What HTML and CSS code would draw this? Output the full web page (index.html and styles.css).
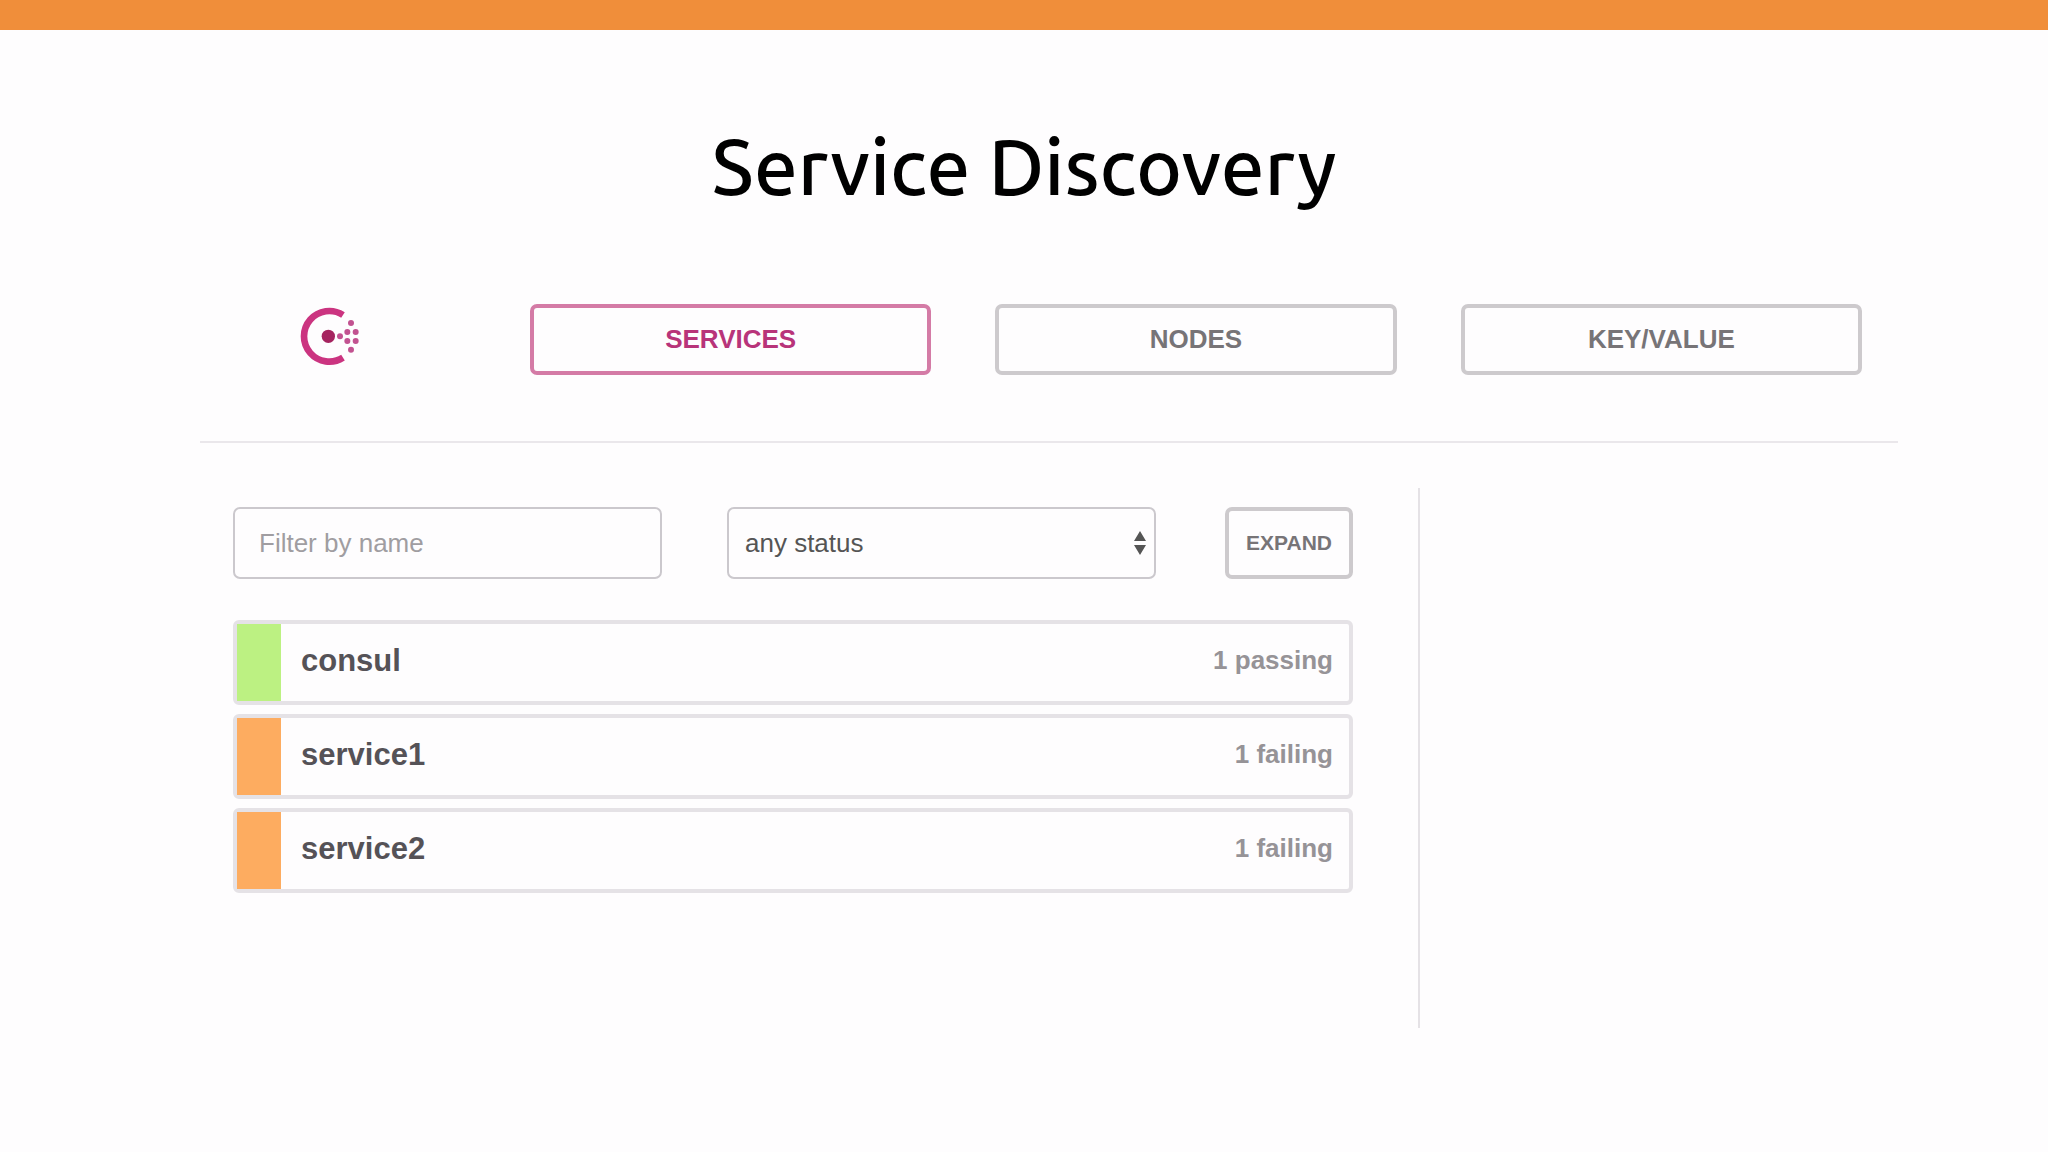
FILE: index.html
```html
<!DOCTYPE html>
<html lang="en">
<head>
<meta charset="utf-8">
<title>Service Discovery</title>
<link rel="stylesheet" href="styles.css">
</head>
<body>
<div class="accent-bar"></div>
<h1 class="title">Service Discovery</h1>
<header class="topbar">
  <a class="logo" href="#" aria-label="Consul">
    <svg class="logo-mark" viewBox="60 50 180 177" aria-hidden="true">
      <path d="M189 74A76 76 0 1 0 189 202" fill="none" stroke="#cb3480" stroke-width="20"/>
      <circle cx="145" cy="138" r="20" fill="#a5235f"/>
      <g fill="#c25290">
        <circle cx="180" cy="138" r="9"/>
        <circle cx="213" cy="98" r="9"/>
        <circle cx="202" cy="125" r="9"/>
        <circle cx="227" cy="125" r="9"/>
        <circle cx="202" cy="152" r="9"/>
        <circle cx="227" cy="152" r="9"/>
        <circle cx="213" cy="178" r="9"/>
      </g>
    </svg>
  </a>
  <a class="tab tab-active" href="#services">SERVICES</a>
  <a class="tab" href="#nodes">NODES</a>
  <a class="tab" href="#kv">KEY/VALUE</a>
</header>
<hr class="rule">
<main class="content">
  <section class="services" id="services">
    <form class="filters">
      <input class="field" type="text" placeholder="Filter by name" aria-label="Filter by name">
      <div class="select-wrap">
        <select class="field select" aria-label="Status">
          <option>any status</option>
          <option>passing</option>
          <option>failing</option>
        </select>
        <svg class="arrows" viewBox="0 0 12 24" aria-hidden="true">
          <path d="M6 0L12 10H0ZM6 24L12 14H0Z" fill="#555"/>
        </svg>
      </div>
      <button class="expand" type="button">EXPAND</button>
    </form>
    <ul class="list">
      <li><a class="row passing" href="#consul"><span class="name">consul</span><span class="checks">1 passing</span></a></li>
      <li><a class="row failing" href="#service1"><span class="name">service1</span><span class="checks">1 failing</span></a></li>
      <li><a class="row failing" href="#service2"><span class="name">service2</span><span class="checks">1 failing</span></a></li>
    </ul>
  </section>
</main>
</body>
</html>
```
FILE: styles.css
```css
* {
  box-sizing: border-box;
}

body {
  margin: 0;
  background: #fefdfe;
  font-family: "Liberation Sans", Arial, sans-serif;
  font-size: 26px;
}

.accent-bar {
  height: 30px;
  background: #f08e3a;
}

.title {
  margin: 88px 0 90px;
  font-family: Ubuntu, "Noto Sans", sans-serif;
  font-size: 78px;
  font-weight: 500;
  line-height: 96px;
  text-align: center;
  color: #000;
}

.topbar {
  display: grid;
  grid-template-columns: 166px repeat(3, 1fr);
  gap: 64px;
  margin: 0 186px 0 300px;
}

.logo-mark {
  display: block;
  width: 60px;
  height: 59px;
  margin-top: 3px;
}

.tab {
  display: flex;
  align-items: center;
  justify-content: center;
  height: 71px;
  border: 4px solid #cdcacd;
  border-radius: 7px;
  font-weight: 700;
  color: #777477;
  text-decoration: none;
}

.tab-active {
  border-color: #d47ba6;
  color: #b8347a;
}

.rule {
  height: 2px;
  margin: 66px 150px 45px 200px;
  border: 0;
  background: #eae7eb;
}

.content {
  display: grid;
  grid-template-columns: 1187fr 478fr;
  margin: 0 150px 0 233px;
}

.services {
  min-height: 540px;
  padding: 19px 65px 0 0;
  border-right: 2px solid #e5e2e6;
}

.filters {
  display: grid;
  grid-template-columns: 1fr 1fr 132px;
  gap: 65px;
}

.field {
  width: 100%;
  height: 72px;
  padding: 0 24px;
  border: 2px solid #cbc8cd;
  border-radius: 7px;
  background: #fefdfe;
  font: inherit;
  color: #555;
}

.field::placeholder {
  color: #a09da1;
  opacity: 1;
}

.select-wrap {
  position: relative;
}

.select {
  appearance: none;
  padding: 0 16px;
}

.arrows {
  position: absolute;
  top: 24px;
  right: 10px;
  width: 12px;
  height: 24px;
  pointer-events: none;
}

.expand {
  justify-self: end;
  width: 128px;
  height: 72px;
  padding: 0;
  border: 4px solid #cdcacd;
  border-radius: 7px;
  background: #fefdfe;
  font: inherit;
  font-size: 21px;
  font-weight: 700;
  color: #777477;
}

.list {
  display: grid;
  gap: 9px;
  margin: 41px 0 0;
  padding: 0;
  list-style: none;
}

.row {
  display: flex;
  align-items: center;
  justify-content: space-between;
  height: 85px;
  padding-right: 16px;
  border: 4px solid #e5e2e6;
  border-radius: 6px;
  font-weight: 700;
  text-decoration: none;
}

.row::before {
  content: "";
  align-self: stretch;
  width: 44px;
  margin-right: 20px;
}

.passing::before {
  background: #bcf182;
}

.failing::before {
  background: #fdac60;
}

.name,
.checks {
  padding-bottom: 4px;
}

.name {
  flex: 1;
  font-size: 31px;
  color: #555257;
}

.checks {
  color: #969397;
}
```
